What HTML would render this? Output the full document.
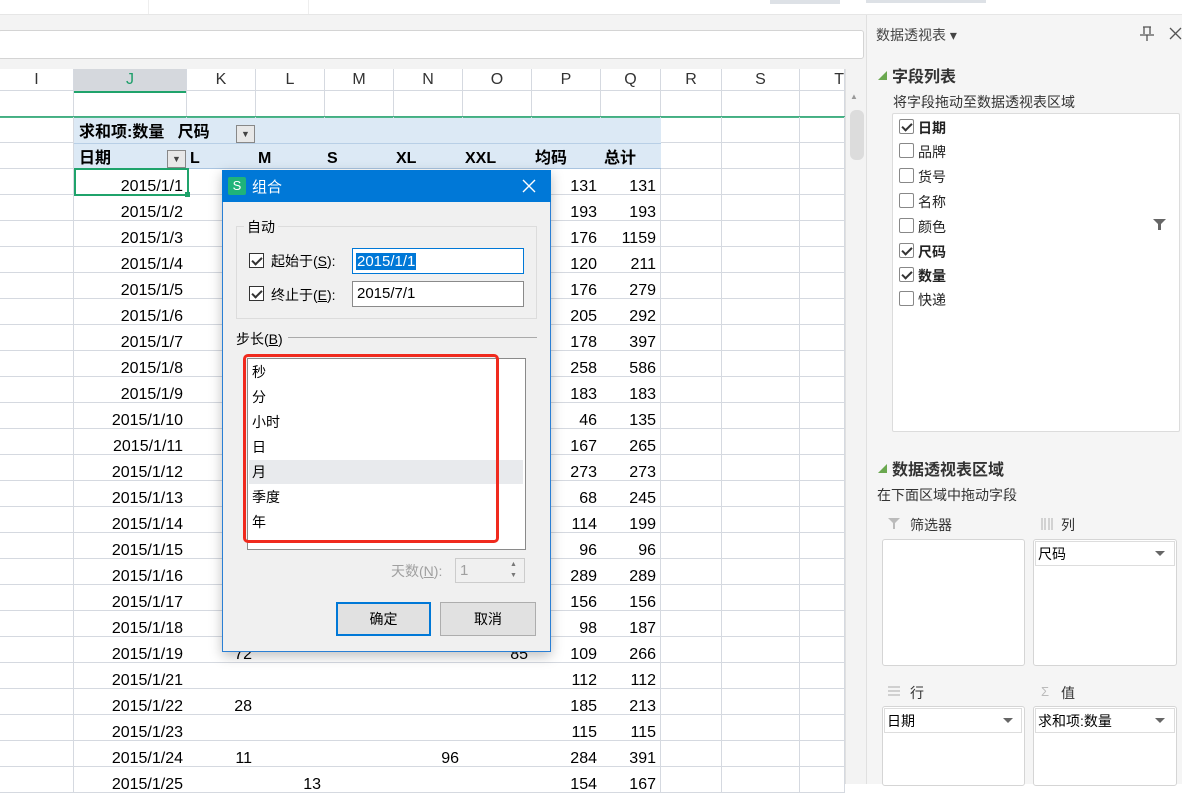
<!DOCTYPE html>
<html><head><meta charset="utf-8">
<style>
*{box-sizing:border-box;margin:0;padding:0}
body{width:1182px;height:784px;overflow:hidden;background:#fff;font-family:"Liberation Sans","Noto Sans CJK SC",sans-serif;position:relative;color:#000}
.a{position:absolute}
.cj{font-family:"Liberation Sans","Noto Sans CJK SC",sans-serif}
.grid{position:absolute;left:0;top:91px;width:845px}
.row{display:grid;grid-template-columns:74px 113px 69px 69px 69px 69px 69px 69px 60px 61px 78px 45px;height:26px}
.row div{border-bottom:1px solid #d5d9e0;border-right:1px solid #d5d9e0;font-size:16px;line-height:35px;height:26px;overflow:hidden;text-align:right;padding-right:4px;white-space:nowrap;font-family:"Liberation Sans Narrow","Liberation Sans",sans-serif}
.pv div:nth-child(n+2):nth-child(-n+8){border-right:none}
.hdr{position:absolute;top:69px;left:0;height:22px;width:845px;display:grid;grid-template-columns:74px 113px 69px 69px 69px 69px 69px 69px 60px 61px 78px 45px;background:#fff;border-bottom:1px solid #d5d9e0}
.hdr div{text-align:center;font-size:16px;line-height:22px;color:#333;border-right:1px solid #d5d9e0}
.chk{position:absolute;width:15px;height:15px;border:1px solid #888;background:#fff;border-radius:2px}
.chk.on::after{content:"";position:absolute;left:4px;top:1px;width:4px;height:8px;border:solid #333;border-width:0 2px 2px 0;transform:rotate(45deg)}
.fl{position:absolute;left:918px;font-size:14px;color:#222}
.hs span{position:absolute;top:0;line-height:20px}
</style></head><body>
<div class="a" style="left:0;top:0;width:866px;height:15px;background:#fff;border-bottom:1px solid #e6e6e6"></div>
<div class="a" style="left:148px;top:0;width:1px;height:14px;background:#eee"></div>
<div class="a" style="left:308px;top:0;width:1px;height:14px;background:#eee"></div>
<div class="a" style="left:770px;top:0;width:70px;height:4px;background:#dde1e6"></div>
<div class="a" style="left:0;top:15px;width:866px;height:54px;background:#f3f3f3"></div>
<div class="a" style="left:-2px;top:30px;width:866px;height:29px;background:#fff;border:1px solid #d4d4d4;border-radius:3px"></div>
<div class="hdr"><div>I</div><div style="background:#d5d8dd;color:#1e9e6a;border-bottom:2px solid #1fa36b">J</div><div>K</div><div>L</div><div>M</div><div>N</div><div>O</div><div>P</div><div>Q</div><div>R</div><div>S</div><div style="text-align:right">T</div></div>
<div class="grid">
<div class="row"><div></div><div></div><div></div><div></div><div></div><div></div><div></div><div></div><div></div><div></div><div></div><div></div></div>
</div>
<div class="a" style="left:0;top:116px;width:845px;height:2px;background:#1fa36b;opacity:.8"></div>
<div class="grid" style="top:117px">
<div class="row"><div></div><div></div><div></div><div></div><div></div><div></div><div></div><div></div><div></div><div></div><div></div><div></div></div>
<div class="row"><div></div><div></div><div></div><div></div><div></div><div></div><div></div><div></div><div></div><div></div><div></div><div></div></div>
</div>
<div class="a" style="left:74px;top:118px;width:587px;height:51px;background:#dce9f5;border-bottom:1px solid #a9c4e0"></div>
<div class="a" style="left:74px;top:143px;width:587px;height:1px;background:#b8cfe6"></div>
<div class="a cj" style="left:79px;top:123px;font-size:16px;line-height:20px;font-weight:bold">求和项:数量 &nbsp;&nbsp;尺码</div>
<div class="a" style="left:236px;top:125px;width:19px;height:18px;border:1px solid #888;background:#e8e8e8;font-size:9px;text-align:center;line-height:16px;color:#444">▼</div>
<div class="a" style="left:167px;top:150px;width:19px;height:18px;border:1px solid #888;background:#e8e8e8;font-size:9px;text-align:center;line-height:16px;color:#444">▼</div>
<div class="a cj hs" style="left:79px;top:149px;font-size:16px;font-weight:bold;width:600px;height:20px">
<span style="left:0">日期</span><span style="left:111px">L</span><span style="left:179px">M</span><span style="left:248px">S</span><span style="left:317px">XL</span><span style="left:386px">XXL</span><span style="left:456px">均码</span><span style="left:525px">总计</span></div>
<div class="grid pv" style="top:169px">
<div class="row"><div></div><div>2015/1/1</div><div></div><div></div><div></div><div></div><div></div><div>131</div><div>131</div><div></div><div></div><div></div></div>
<div class="row"><div></div><div>2015/1/2</div><div></div><div></div><div></div><div></div><div></div><div>193</div><div>193</div><div></div><div></div><div></div></div>
<div class="row"><div></div><div>2015/1/3</div><div></div><div></div><div></div><div></div><div></div><div>176</div><div>1159</div><div></div><div></div><div></div></div>
<div class="row"><div></div><div>2015/1/4</div><div></div><div></div><div></div><div></div><div></div><div>120</div><div>211</div><div></div><div></div><div></div></div>
<div class="row"><div></div><div>2015/1/5</div><div></div><div></div><div></div><div></div><div></div><div>176</div><div>279</div><div></div><div></div><div></div></div>
<div class="row"><div></div><div>2015/1/6</div><div></div><div></div><div></div><div></div><div></div><div>205</div><div>292</div><div></div><div></div><div></div></div>
<div class="row"><div></div><div>2015/1/7</div><div></div><div></div><div></div><div></div><div></div><div>178</div><div>397</div><div></div><div></div><div></div></div>
<div class="row"><div></div><div>2015/1/8</div><div></div><div></div><div></div><div></div><div></div><div>258</div><div>586</div><div></div><div></div><div></div></div>
<div class="row"><div></div><div>2015/1/9</div><div></div><div></div><div></div><div></div><div></div><div>183</div><div>183</div><div></div><div></div><div></div></div>
<div class="row"><div></div><div>2015/1/10</div><div></div><div></div><div></div><div></div><div></div><div>46</div><div>135</div><div></div><div></div><div></div></div>
<div class="row"><div></div><div>2015/1/11</div><div></div><div></div><div></div><div></div><div></div><div>167</div><div>265</div><div></div><div></div><div></div></div>
<div class="row"><div></div><div>2015/1/12</div><div></div><div></div><div></div><div></div><div></div><div>273</div><div>273</div><div></div><div></div><div></div></div>
<div class="row"><div></div><div>2015/1/13</div><div></div><div></div><div></div><div></div><div></div><div>68</div><div>245</div><div></div><div></div><div></div></div>
<div class="row"><div></div><div>2015/1/14</div><div></div><div></div><div></div><div></div><div></div><div>114</div><div>199</div><div></div><div></div><div></div></div>
<div class="row"><div></div><div>2015/1/15</div><div></div><div></div><div></div><div></div><div></div><div>96</div><div>96</div><div></div><div></div><div></div></div>
<div class="row"><div></div><div>2015/1/16</div><div></div><div></div><div></div><div></div><div></div><div>289</div><div>289</div><div></div><div></div><div></div></div>
<div class="row"><div></div><div>2015/1/17</div><div></div><div></div><div></div><div></div><div></div><div>156</div><div>156</div><div></div><div></div><div></div></div>
<div class="row"><div></div><div>2015/1/18</div><div></div><div></div><div></div><div></div><div></div><div>98</div><div>187</div><div></div><div></div><div></div></div>
<div class="row"><div></div><div>2015/1/19</div><div>72</div><div></div><div></div><div></div><div>85</div><div>109</div><div>266</div><div></div><div></div><div></div></div>
<div class="row"><div></div><div>2015/1/21</div><div></div><div></div><div></div><div></div><div></div><div>112</div><div>112</div><div></div><div></div><div></div></div>
<div class="row"><div></div><div>2015/1/22</div><div>28</div><div></div><div></div><div></div><div></div><div>185</div><div>213</div><div></div><div></div><div></div></div>
<div class="row"><div></div><div>2015/1/23</div><div></div><div></div><div></div><div></div><div></div><div>115</div><div>115</div><div></div><div></div><div></div></div>
<div class="row"><div></div><div>2015/1/24</div><div>11</div><div></div><div></div><div>96</div><div></div><div>284</div><div>391</div><div></div><div></div><div></div></div>
<div class="row"><div></div><div>2015/1/25</div><div></div><div>13</div><div></div><div></div><div></div><div>154</div><div>167</div><div></div><div></div><div></div></div>
</div>
<div class="a" style="left:74px;top:168px;width:115px;height:28px;border:2px solid #1fa36b"></div>
<div class="a" style="left:185px;top:192px;width:5px;height:5px;background:#1fa36b"></div>
<div class="a" style="left:845px;top:69px;width:21px;height:715px;background:#f3f3f3;border-left:1px solid #e0e0e0"></div>
<div class="a" style="left:850px;top:92px;font-size:8px;color:#999">▲</div>
<div class="a" style="left:850px;top:110px;width:14px;height:50px;background:#dcdcdc;border-radius:6px"></div>
<!-- dialog -->
<div class="a" style="left:222px;top:170px;width:329px;height:482px;background:#f0f0f0;border:1px solid #2a7fd4;box-shadow:0 4px 12px rgba(0,0,0,.25)"></div>
<div class="a" style="left:222px;top:170px;width:329px;height:32px;background:#0078d7"></div>
<div class="a" style="left:228px;top:177px;width:18px;height:18px;background:#1fb37a;border-radius:2px;color:#fff;font-size:13px;text-align:center;line-height:18px">S</div>
<div class="a cj" style="left:252px;top:176px;color:#fff;font-size:15px">组合</div>
<svg class="a" style="left:522px;top:179px" width="14" height="14"><path d="M1 1L13 13M13 1L1 13" stroke="#fff" stroke-width="1.4"/></svg>
<div class="a" style="left:236px;top:226px;width:301px;height:93px;border:1px solid #dcdcdc"></div>
<div class="a cj" style="left:244px;top:217px;font-size:14px;background:#f0f0f0;padding:0 3px">自动</div>
<div class="chk on" style="left:249px;top:253px;border-color:#333;border-radius:0"></div>
<div class="a cj" style="left:271px;top:251px;font-size:14px">起始于(<u>S</u>):</div>
<div class="a" style="left:352px;top:248px;width:172px;height:26px;background:#fff;border:1px solid #0078d7"></div>
<div class="a" style="left:356px;top:253px;height:17px;background:#0078d7;color:#fff;font-size:15px;line-height:17px;padding:0 1px">2015/1/1</div>
<div class="chk on" style="left:249px;top:286px;border-color:#333;border-radius:0"></div>
<div class="a cj" style="left:271px;top:285px;font-size:14px">终止于(<u>E</u>):</div>
<div class="a" style="left:352px;top:281px;width:172px;height:26px;background:#fff;border:1px solid #8a8a8a;font-size:15px;line-height:24px;padding-left:4px">2015/7/1</div>
<div class="a cj" style="left:236px;top:329px;font-size:14px">步长(<u>B</u>)</div>
<div class="a" style="left:288px;top:337px;width:249px;height:1px;background:#aaa"></div>
<div class="a" style="left:247px;top:358px;width:279px;height:192px;background:#fff;border:1px solid #8a8a8a"></div>
<div class="a" style="left:249px;top:460px;width:274px;height:24px;background:#e8eaed"></div>
<div class="a cj" style="left:252px;top:360px;font-size:14px;line-height:25px">秒<br>分<br>小时<br>日<br>月<br>季度<br>年</div>
<div class="a" style="left:243px;top:354px;width:256px;height:189px;border:3px solid #f02a1e;border-radius:5px"></div>
<div class="a cj" style="left:391px;top:561px;font-size:14px;color:#a0a0a0">天数(<u>N</u>):</div>
<div class="a" style="left:455px;top:558px;width:70px;height:25px;border:1px solid #ccc;background:#f0f0f0;color:#a0a0a0;font-size:15px;line-height:23px;padding-left:4px">1</div>
<div class="a" style="left:510px;top:559px;font-size:7px;color:#777;line-height:11px">▲<br>▼</div>
<div class="a cj" style="left:336px;top:602px;width:95px;height:34px;background:#e1e1e1;border:2px solid #0078d7;text-align:center;line-height:30px;font-size:14px">确定</div>
<div class="a cj" style="left:440px;top:602px;width:96px;height:34px;background:#e1e1e1;border:1px solid #adadad;text-align:center;line-height:32px;font-size:14px">取消</div>
<!-- right panel -->
<div class="a" style="left:866px;top:0;width:316px;height:784px;background:#f5f5f5;border-left:1px solid #e0e0e0"></div>
<div class="a" style="left:866px;top:0;width:316px;height:15px;background:#fff;border-bottom:1px solid #e6e6e6"></div>
<div class="a" style="left:866px;top:0;width:120px;height:3px;background:#dde1e6"></div>
<div class="a cj" style="left:876px;top:25px;font-size:14px;color:#444">数据透视表 ▾</div>
<svg class="a" style="left:1138px;top:26px" width="18" height="16"><path d="M5 1H13M6 1V8M12 1V8M2 9H16M9 9V15" stroke="#555" fill="none" stroke-width="1.3"/></svg>
<svg class="a" style="left:1169px;top:27px" width="13" height="13"><path d="M1 1L12 12M12 1L1 12" stroke="#555" stroke-width="1.3"/></svg>
<div class="a" style="left:878px;top:69px;font-size:9px;color:#6aa84f">◢</div>
<div class="a cj" style="left:892px;top:63px;font-size:16px;font-weight:bold;color:#333">字段列表</div>
<div class="a cj" style="left:893px;top:92px;font-size:14px;color:#333">将字段拖动至数据透视表区域</div>
<div class="a" style="left:892px;top:113px;width:288px;height:319px;background:#fff;border:1px solid #dcdcdc;border-radius:2px"></div>
<div class="chk on" style="left:899px;top:119px"></div><div class="fl" style="top:118px;font-weight:bold">日期</div>
<div class="chk" style="left:899px;top:143px"></div><div class="fl" style="top:142px">品牌</div>
<div class="chk" style="left:899px;top:168px"></div><div class="fl" style="top:167px">货号</div>
<div class="chk" style="left:899px;top:193px"></div><div class="fl" style="top:192px">名称</div>
<div class="chk" style="left:899px;top:218px"></div><div class="fl" style="top:217px">颜色</div>
<div class="chk on" style="left:899px;top:243px"></div><div class="fl" style="top:242px;font-weight:bold">尺码</div>
<div class="chk on" style="left:899px;top:267px"></div><div class="fl" style="top:266px;font-weight:bold">数量</div>
<div class="chk" style="left:899px;top:291px"></div><div class="fl" style="top:290px">快递</div>
<svg class="a" style="left:1153px;top:219px" width="13" height="12"><path d="M0 0H13L8 5V11H5V5Z" fill="#666"/></svg>
<div class="a" style="left:878px;top:462px;font-size:9px;color:#6aa84f">◢</div>
<div class="a cj" style="left:892px;top:456px;font-size:16px;font-weight:bold;color:#333">数据透视表区域</div>
<div class="a cj" style="left:877px;top:485px;font-size:14px;color:#333">在下面区域中拖动字段</div>
<svg class="a" style="left:888px;top:518px" width="12" height="12"><path d="M0 0H12L7 5V11H5V5Z" fill="#bbb"/></svg>
<div class="a cj" style="left:910px;top:515px;font-size:14px;color:#333">筛选器</div>
<svg class="a" style="left:1041px;top:518px" width="12" height="12"><path d="M1 0V12M4 0V12M8 0V12M11 0V12" stroke="#bbb" stroke-width="1.2"/></svg>
<div class="a cj" style="left:1061px;top:515px;font-size:14px;color:#333">列</div>
<div class="a" style="left:882px;top:539px;width:143px;height:127px;background:#fff;border:1px solid #d5d5d5;border-radius:3px"></div>
<div class="a" style="left:1033px;top:539px;width:144px;height:127px;background:#fff;border:1px solid #d5d5d5;border-radius:3px"></div>
<div class="a" style="left:1035px;top:541px;width:140px;height:25px;border:1px solid #ddd"></div>
<div class="a cj" style="left:1038px;top:544px;font-size:14px">尺码</div>
<div class="a" style="left:1155px;top:551px;border:5px solid transparent;border-top-color:#666;border-bottom:0"></div>
<svg class="a" style="left:888px;top:686px" width="12" height="10"><path d="M0 1H12M0 5H12M0 9H12" stroke="#bbb" stroke-width="1.2"/></svg>
<div class="a cj" style="left:910px;top:683px;font-size:14px;color:#333">行</div>
<div class="a" style="left:1041px;top:684px;font-size:13px;color:#bbb">Σ</div>
<div class="a cj" style="left:1061px;top:683px;font-size:14px;color:#333">值</div>
<div class="a" style="left:882px;top:706px;width:143px;height:80px;background:#fff;border:1px solid #d5d5d5;border-radius:3px"></div>
<div class="a" style="left:1033px;top:706px;width:144px;height:80px;background:#fff;border:1px solid #d5d5d5;border-radius:3px"></div>
<div class="a" style="left:884px;top:708px;width:138px;height:25px;border:1px solid #ddd"></div>
<div class="a cj" style="left:887px;top:711px;font-size:14px">日期</div>
<div class="a" style="left:1003px;top:718px;border:5px solid transparent;border-top-color:#666;border-bottom:0"></div>
<div class="a" style="left:1035px;top:708px;width:140px;height:25px;border:1px solid #ddd"></div>
<div class="a cj" style="left:1038px;top:711px;font-size:14px">求和项:数量</div>
<div class="a" style="left:1155px;top:718px;border:5px solid transparent;border-top-color:#666;border-bottom:0"></div>
</body></html>
